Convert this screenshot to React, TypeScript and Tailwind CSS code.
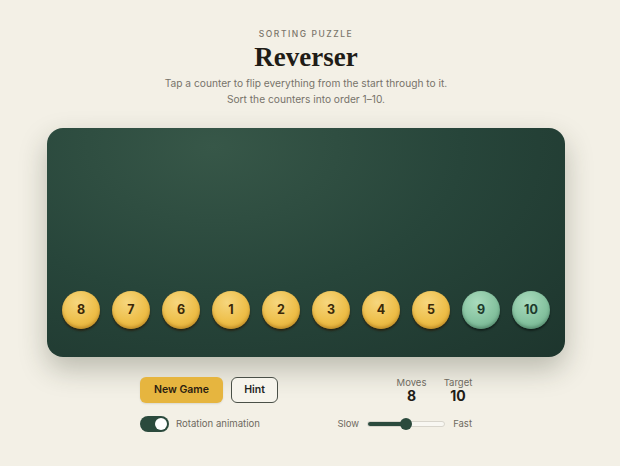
import { useState } from "react";

const order = [8, 7, 6, 1, 2, 3, 4, 5, 9, 10];

function Counter({ n, placed }: { n: number; placed: boolean }) {
  return (
    <button
      className={`w-[38px] h-[38px] rounded-full flex items-center justify-center text-[12.5px] font-bold shrink-0 ${
        placed
          ? "bg-[radial-gradient(circle_at_40%_30%,#a9dbbd,#86c3a0_55%,#6aa786)] text-[#1d3a2c] shadow-[inset_0_-2px_3px_rgba(30,70,50,0.35),0_2px_2px_rgba(0,0,0,0.45)]"
          : "bg-[radial-gradient(circle_at_40%_30%,#f6d67e,#eebf4a_55%,#e0a92e)] text-[#3a2708] shadow-[inset_0_-2px_3px_rgba(120,70,0,0.35),0_2px_2px_rgba(40,20,0,0.6)]"
      }`}
    >
      {n}
    </button>
  );
}

export default function App() {
  const [animate, setAnimate] = useState(true);
  const [speed, setSpeed] = useState(50);

  return (
    <div className="w-full min-h-[466px] bg-[#f3f0e6] font-['Inter',sans-serif] text-[#24211c] flex flex-col items-center pt-[29px] pr-[8px]">
      <p className="text-[8.5px] tracking-[0.18em] font-medium text-[#7b766b] leading-[10px]">SORTING PUZZLE</p>
      <h1 className="mt-[4px] font-['Liberation_Serif',serif] font-bold text-[27px] leading-[28px] text-[#1f1c17]">Reverser</h1>
      <p className="mt-[4px] text-[10.2px] leading-[16px] text-[#77736a] text-center">
        Tap a counter to flip everything from the start through to it.
        <br />
        Sort the counters into order 1–10.
      </p>

      <div className="mt-[21px] w-[518px] h-[229px] rounded-[16px] bg-[radial-gradient(ellipse_at_32%_8%,#375748,#27453a_50%,#1d352d)] shadow-[0_12px_28px_rgba(40,45,30,0.28)] flex items-end justify-between px-[15px] pb-[28px]">
        {order.map((n) => (
          <Counter key={n} n={n} placed={n >= 9} />
        ))}
      </div>

      <div className="mt-[19px] w-[332px] flex flex-col gap-[12px]">
        <div className="flex items-center justify-between">
          <div className="flex gap-[8px]">
            <button className="w-[83px] h-[26px] rounded-[6px] bg-[#e6b53f] text-[10.5px] font-semibold text-[#2b2010] shadow-[0_1px_2px_rgba(0,0,0,0.1)]">
              New Game
            </button>
            <button className="w-[47px] h-[26px] rounded-[6px] border border-[#4a5048] bg-[#f6f4ec] text-[10.5px] font-semibold text-[#1f241f]">
              Hint
            </button>
          </div>
          <div className="flex gap-[19px] pt-[1px]">
            <div className="flex flex-col items-center w-[27px]">
              <span className="text-[9.5px] leading-[11px] text-[#6e6a60]">Moves</span>
              <span className="text-[14px] leading-[16px] font-bold text-[#1f1c17]">8</span>
            </div>
            <div className="flex flex-col items-center w-[28px]">
              <span className="text-[9.5px] leading-[11px] text-[#6e6a60]">Target</span>
              <span className="text-[14px] leading-[16px] font-bold text-[#1f1c17]">10</span>
            </div>
          </div>
        </div>

        <div className="flex items-center justify-between">
          <label className="flex items-center gap-[7px] cursor-pointer" onClick={() => setAnimate(!animate)}>
            <span
              className={`w-[29px] h-[16px] rounded-full p-[2px] flex ${
                animate ? "bg-[#2b4a3d] justify-end" : "bg-[#c9c5ba] justify-start"
              }`}
            >
              <span className="w-[12px] h-[12px] rounded-full bg-white" />
            </span>
            <span className="text-[9.6px] text-[#6e6a60]">Rotation animation</span>
          </label>
          <div className="flex items-center gap-[8px]">
            <span className="text-[9.5px] text-[#6e6a60]">Slow</span>
            <div className="relative w-[78px] h-[12px] flex items-center">
              <div className="w-full h-[6px] rounded-full bg-[#f8f7f2] border border-[#d8d5cc] overflow-hidden">
                <div className="h-full bg-[#2b4a3d]" style={{ width: `${speed}%` }} />
              </div>
              <input
                type="range"
                min={0}
                max={100}
                value={speed}
                onChange={(e) => setSpeed(Number(e.target.value))}
                className="absolute inset-0 opacity-0"
              />
              <span
                className="absolute top-[0px] w-[12px] h-[12px] rounded-full bg-[#2b4a3d] -translate-x-1/2 pointer-events-none"
                style={{ left: `${speed}%` }}
              />
            </div>
            <span className="text-[9.5px] text-[#6e6a60]">Fast</span>
          </div>
        </div>
      </div>
    </div>
  );
}
